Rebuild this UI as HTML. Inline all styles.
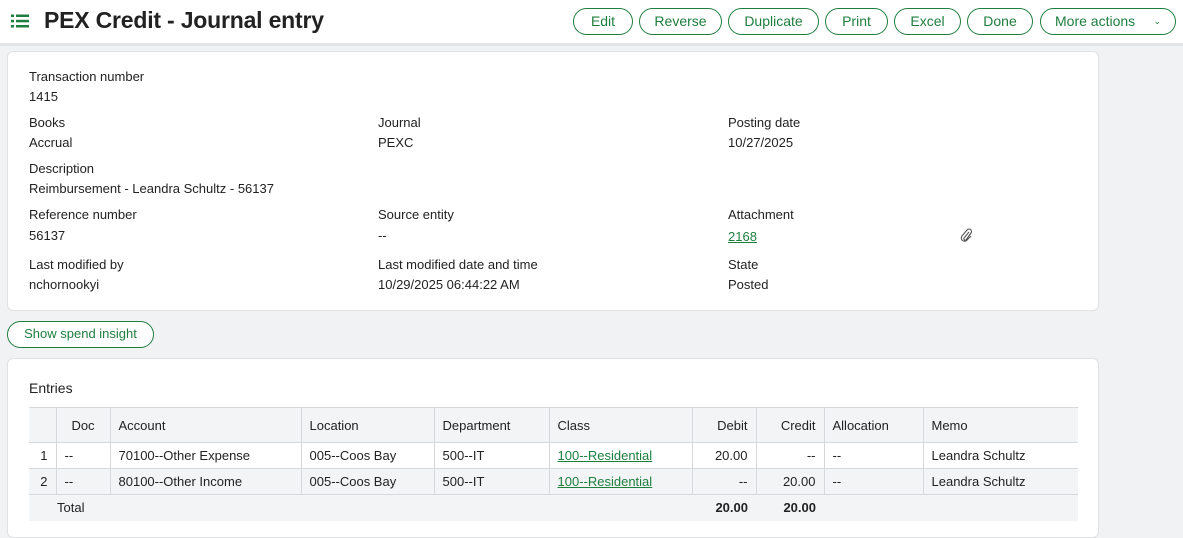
<!DOCTYPE html>
<html><head><style>
*{box-sizing:border-box;margin:0;padding:0}
body{width:1183px;height:519px;overflow:hidden;background:#f0f2f3;font-family:"Liberation Sans",sans-serif;color:#222;font-size:13px;position:relative}
.hdr{position:absolute;left:0;top:0;width:1183px;height:46px;background:#fff;border-bottom:3px solid #e3e5e6}
.title{position:absolute;left:44px;top:7px;font-size:23px;font-weight:bold;color:#222;letter-spacing:-0.2px}
.btn{position:absolute;top:8px;height:27px;border:1.5px solid #1e7e3e;border-radius:14px;color:#1e7e3e;font-size:14px;line-height:24px;text-align:center;background:#fff}
.card{position:absolute;background:#fff;border:1px solid #dfe1e2;border-radius:6px}
.l{position:absolute;font-size:13px;color:#222}
a{color:#1e7e3e;text-decoration:underline}
table{position:absolute;left:29px;top:407px;border-collapse:collapse;font-size:13px}
td,th{height:26px;padding:0 8px;border:1px solid #d6d9db;font-weight:normal;text-align:left;white-space:nowrap}
th{height:35px;background:#f3f4f5}
tr.g td{background:#f3f4f5}
td:first-child,th:first-child{border-left:none}
.r{text-align:right}
</style></head><body>
<div class="hdr">
<svg style="position:absolute;left:11px;top:14px" width="18" height="14" viewBox="0 0 18 14"><g fill="#1e7e3e"><rect x="0" y="0.5" width="3" height="2.5"/><rect x="5" y="0.5" width="13" height="2.5"/><rect x="0" y="5.8" width="3" height="2.5"/><rect x="5" y="5.8" width="13" height="2.5"/><rect x="0" y="11" width="3" height="2.5"/><rect x="5" y="11" width="13" height="2.5"/></g></svg>
<div class="title">PEX Credit - Journal entry</div>
<div class="btn" style="left:573px;width:60px">Edit</div>
<div class="btn" style="left:639px;width:83px">Reverse</div>
<div class="btn" style="left:728px;width:91px">Duplicate</div>
<div class="btn" style="left:825px;width:63px">Print</div>
<div class="btn" style="left:894px;width:67px">Excel</div>
<div class="btn" style="left:967px;width:66px">Done</div>
<div class="btn" style="left:1040px;width:136px;text-align:left;padding-left:14px">More actions <span style="position:absolute;right:14px;font-size:9px">&#8964;</span></div>
</div>
<div class="card" style="left:7px;top:51px;width:1092px;height:260px"></div>
<div class="l" style="left:29px;top:69px">Transaction number</div><div class="l" style="left:29px;top:89px">1415</div>
<div class="l" style="left:29px;top:115px">Books</div><div class="l" style="left:29px;top:135px">Accrual</div>
<div class="l" style="left:378px;top:115px">Journal</div><div class="l" style="left:378px;top:135px">PEXC</div>
<div class="l" style="left:728px;top:115px">Posting date</div><div class="l" style="left:728px;top:135px">10/27/2025</div>
<div class="l" style="left:29px;top:161px">Description</div><div class="l" style="left:29px;top:181px">Reimbursement - Leandra Schultz - 56137</div>
<div class="l" style="left:29px;top:207px">Reference number</div><div class="l" style="left:29px;top:228px">56137</div>
<div class="l" style="left:378px;top:207px">Source entity</div><div class="l" style="left:378px;top:228px">--</div>
<div class="l" style="left:728px;top:207px">Attachment</div><div class="l" style="left:728px;top:229px"><a>2168</a></div>
<svg style="position:absolute;left:960px;top:228px" width="14" height="15" viewBox="0 0 14 15"><path d="M9 4 L4 10 a1.5 1.5 0 0 0 2 2 L11 5 a2.5 2.5 0 0 0 -4 -3 L2 8 a3.2 3.2 0 0 0 5 4 L11 8" fill="none" stroke="#555" stroke-width="1.1"/></svg>
<div class="l" style="left:29px;top:257px">Last modified by</div><div class="l" style="left:29px;top:277px">nchornookyi</div>
<div class="l" style="left:378px;top:257px">Last modified date and time</div><div class="l" style="left:378px;top:277px">10/29/2025 06:44:22 AM</div>
<div class="l" style="left:728px;top:257px">State</div><div class="l" style="left:728px;top:277px">Posted</div>
<div class="btn" style="left:7px;top:321px;width:147px;height:27px;font-size:13px;border-width:1px">Show spend insight</div>
<div class="card" style="left:7px;top:358px;width:1092px;height:180px"></div>
<div class="l" style="left:29px;top:380px;font-size:14px">Entries</div>
<table>
<tr><th style="width:27px"></th><th style="width:54px;text-align:center">Doc</th><th style="width:191px">Account</th><th style="width:133px">Location</th><th style="width:115px">Department</th><th style="width:143px">Class</th><th class="r" style="width:64px">Debit</th><th class="r" style="width:68px">Credit</th><th style="width:99px">Allocation</th><th style="width:155px;border-right:none">Memo</th></tr>
<tr><td class="r">1</td><td>--</td><td>70100--Other Expense</td><td>005--Coos Bay</td><td>500--IT</td><td><a>100--Residential</a></td><td class="r">20.00</td><td class="r">--</td><td>--</td><td style="border-right:none">Leandra Schultz</td></tr>
<tr class="g"><td class="r">2</td><td>--</td><td>80100--Other Income</td><td>005--Coos Bay</td><td>500--IT</td><td><a>100--Residential</a></td><td class="r">--</td><td class="r">20.00</td><td>--</td><td style="border-right:none">Leandra Schultz</td></tr>
<tr class="g"><td style="border:none"></td><td colspan="5" style="border:none;padding-left:1px">Total</td><td class="r" style="border:none;font-weight:bold">20.00</td><td class="r" style="border:none;font-weight:bold">20.00</td><td style="border:none"></td><td style="border:none"></td></tr>
</table>
</body></html>
